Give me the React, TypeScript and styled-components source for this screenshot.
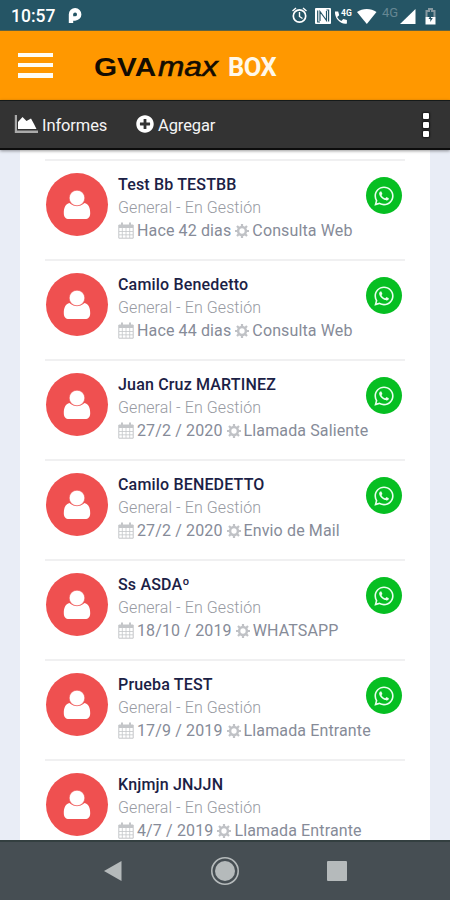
import React from 'react';
import styled, { createGlobalStyle } from 'styled-components';
import { FaPlusCircle, FaWhatsapp } from 'react-icons/fa';

const GlobalStyle = createGlobalStyle`
  * { box-sizing: border-box; }
  body { margin: 0; background: #e9edf6; font-family: Roboto, "Noto Sans", sans-serif; }
`;

const Screen = styled.div`
  width: 450px;
  height: 900px;
  display: flex;
  flex-direction: column;
  overflow: hidden;
`;

const StatusBar = styled.div`
  flex: none;
  height: 31px;
  padding: 1px 13px 0 11px;
  display: flex;
  align-items: center;
  justify-content: space-between;
  background: #255565;
  border-bottom: 1px solid #5d6344;
  color: #fff;
`;

const Clock = styled.div`
  display: flex;
  align-items: center;
  gap: 13px;
  font-size: 17.5px;
  font-weight: 500;
  line-height: 30px;
`;

const StatusIcons = styled.div`
  display: flex;
  align-items: center;
`;

const Network = styled.span`
  width: 18px;
  margin: -6px 0 0 4px;
  font-size: 13px;
  line-height: 14px;
  color: #658793;
`;

const Header = styled.header`
  flex: none;
  height: 69px;
  padding: 0 18px;
  display: flex;
  align-items: center;
  background: #ff9800;
`;

const MenuButton = styled.div`
  width: 35px;
  height: 25px;
  margin-top: -1px;
  display: flex;
  flex-direction: column;
  justify-content: space-between;
`;

const MenuLine = styled.span`
  height: 4.5px;
  background: #fffdf5;
`;

const Brand = styled.h1`
  margin: 2px 0 0 41px;
  display: flex;
  align-items: baseline;
  font-size: 25px;
  line-height: 32px;
  font-weight: 700;
`;

const BrandName = styled.span`
  width: 64px;
  color: #130c02;
  font-family: "Liberation Sans", sans-serif;
  font-weight: 700;
  font-size: 26.5px;
  transform: scaleX(1.12);
  transform-origin: left;
`;

const BrandSuffix = styled.span`
  width: 70px;
  color: #130c02;
  font-family: "Liberation Sans", sans-serif;
  font-style: italic;
  font-weight: 400;
  font-size: 27px;
  transform: scaleX(1.17);
  transform-origin: left;
  -webkit-text-stroke: 0.6px #130c02;
`;

const BrandProduct = styled.span`
  color: #fff8ea;
  font-size: 25.5px;
  letter-spacing: -0.6px;
`;

const Toolbar = styled.nav`
  flex: none;
  height: 50px;
  padding: 1px 21px 0 14px;
  display: flex;
  align-items: center;
  background: #333;
  border-top: 1px solid #151a1a;
  border-bottom: 2px solid #0c0c0c;
  box-shadow: 0 1px 3px rgba(0, 0, 0, 0.4);
  z-index: 1;
`;

const ToolbarItem = styled.div<{ $gap: number; $width: number }>`
  width: ${({ $width }) => $width}px;
  display: flex;
  align-items: center;
  gap: ${({ $gap }) => $gap}px;
  color: #f5f5f5;
  font-size: 16.5px;
  letter-spacing: -0.1px;
  white-space: nowrap;

  svg { margin-top: -2px; }
`;

const MoreButton = styled.div`
  margin-left: auto;
  display: flex;
  flex-direction: column;
  gap: 3px;
`;

const MoreDot = styled.span`
  width: 6px;
  height: 6px;
  border-radius: 1px;
  background: #fff;
  box-shadow: 0 0 2px 1px #151515;
`;

const Content = styled.main`
  flex: 1;
  min-height: 0;
  padding: 0 20px;
  overflow: hidden;
  background: #e9edf6;
`;

const Card = styled.div`
  height: 100%;
  padding: 9px 25px 0;
  overflow: hidden;
  background: #fff;
`;

const ContactRow = styled.article`
  height: 100px;
  padding: 12px 3px 0 1px;
  display: flex;
  align-items: flex-start;
  border-top: 2px solid #f0f0f1;
`;

const Avatar = styled.div`
  flex: none;
  width: 62px;
  height: 63px;
  border-radius: 50%;
  display: flex;
  align-items: center;
  justify-content: center;
  background: #ef5050;
`;

const Details = styled.div`
  flex: 1;
  min-width: 0;
  margin-left: 10px;
  font-size: 16px;
  line-height: 23px;
  white-space: nowrap;
`;

const Name = styled.div`
  color: #1b2145;
  font-weight: 500;
  letter-spacing: 0.17px;
`;

const Status = styled.div`
  color: #979aa2;
  font-weight: 300;
  letter-spacing: 0.08px;
`;

const Activity = styled.div`
  display: flex;
  align-items: center;
  color: #868b98;
  letter-spacing: 0.13px;

  svg { flex: none; }
  span { margin: 0 4px 0 3px; }
`;

const WhatsAppButton = styled.div`
  flex: none;
  width: 36px;
  height: 37px;
  margin: 4px 0 0 -36px;
  border-radius: 50%;
  display: flex;
  align-items: center;
  justify-content: center;
  background: #06bf22;
  color: #e9ffed;
`;

const NavigationBar = styled.footer`
  flex: none;
  height: 60px;
  padding: 0 103px;
  display: flex;
  align-items: center;
  justify-content: space-between;
  background: #464e53;
  border-top: 2px solid #333f40;
`;

const ParkingIcon = () => (
  <svg width="14" height="17" viewBox="0 0 14 17" fill="none">
    <path d="M3 16V7.300a4.100 4.100 0 1 1 4.100 4.200H4" stroke="#fff" strokeWidth="4.400" />
    <circle cx="7" cy="7.200" r="1.200" fill="#255565" />
  </svg>
);

const SystemIcons = () => (
  <svg width="86" height="20" viewBox="0 0 86 20" fill="none">
    <g stroke="#fff" strokeWidth="1.7">
      <circle cx="7.500" cy="10" r="6.200" />
      <path d="M7.500 6v4.500l3 2M.5 5 4 2M14.500 5 11 2" strokeWidth="1.4" />
    </g>
    <rect x="23" y="2" width="16" height="16" rx="1" fill="#fff" />
    <path d="M28 15V5.500l6.500 9V5M25.700 4.500v11.500H28M36.600 15.500V4h-2.200" stroke="#255565" strokeWidth="1.2" />
    <path d="M43 5.500h3.200l1 3.700-2 1.700c1 2 2.400 3.200 4.200 4l1.800-2 3.700 1v3.600c-6 1.300-12.500-5-11.900-12z" fill="#fff" />
    <text x="49" y="9.500" fill="#fff" fontSize="8.500" fontWeight="700" fontFamily="Roboto">4G</text>
    <path d="M65 6c5.500-4 14-4 19.500 0l-9.700 12z" fill="#fff" />
  </svg>
);

const SignalIcons = () => (
  <svg width="37" height="20" viewBox="0 0 37 20" fill="none">
    <path d="M0 18 15.500 3v15z" fill="#fff" />
    <path d="M26.500 11V5h2.500V3h3v2h2.500v6" stroke="#8799a0" strokeWidth="2" />
    <path d="M25.500 11h10v7.500h-10z" fill="#fff" />
    <path d="m31 9-2.500 4h1.800v3l2.500-4H31z" fill="#255565" />
  </svg>
);

const ReportIcon = () => (
  <svg width="24" height="18" viewBox="0 0 24 18">
    <path d="M.8 0h2.200v15.500h21V18H.8z" fill="#aaa" />
    <path d="M4 14V7L8.500 2 12.500 6 17 3.500l3 5.500 2.500 5z" fill="#fff" />
  </svg>
);

const PersonIcon = () => (
  <svg width="28" height="30" viewBox="0 0 28 30">
    <path
      d="M6.500 13C2.300 14 .8 18 .8 23.200.8 26.800 2.700 29 6 29h16c3.300 0 5.200-2.200 5.200-5.800 0-5.200-1.500-9.200-5.700-10.200-4 4-11 4-15 0z"
      fill="#fff"
    />
    <circle cx="14" cy="8" r="7.800" fill="#fff" stroke="#ef5050" strokeWidth=".6" />
  </svg>
);

const CalendarIcon = () => (
  <svg width="16" height="17" viewBox="0 0 16 17" fill="none" stroke="#c4c6c9">
    <path d="M.8 3h14.400v13.200H.8z" />
    <path d="M.8 4.500h14.400" strokeWidth="3" />
    <path d="M1 9.500h14M1 12.800h14M4.300 6v10M8 6v10M11.700 6v10" strokeWidth=".8" />
    <path d="M4 .5v4M12 .5v4" strokeWidth="2" />
  </svg>
);

const GearIcon = () => (
  <svg width="14" height="14" viewBox="0 0 14 14" fill="none" stroke="#c0c2c6">
    <circle cx="7" cy="7" r="3.900" strokeWidth="2.500" />
    <path
      d="M7 0v3M7 11v3M0 7h3M11 7h3M2 2l2.200 2.200M9.800 9.800 12 12M2 12l2.200-2.200M9.800 4.200 12 2"
      strokeWidth="2.200"
    />
  </svg>
);

type Contact = {
  name: string;
  date: string;
  activity: string;
  whatsapp: boolean;
};

const contacts: Contact[] = [
  { name: 'Test Bb TESTBB', date: 'Hace 42 dias', activity: 'Consulta Web', whatsapp: true },
  { name: 'Camilo Benedetto', date: 'Hace 44 dias', activity: 'Consulta Web', whatsapp: true },
  { name: 'Juan Cruz MARTINEZ', date: '27/2 / 2020', activity: 'Llamada Saliente', whatsapp: true },
  { name: 'Camilo BENEDETTO', date: '27/2 / 2020', activity: 'Envio de Mail', whatsapp: true },
  { name: 'Ss ASDAº', date: '18/10 / 2019', activity: 'WHATSAPP', whatsapp: true },
  { name: 'Prueba TEST', date: '17/9 / 2019', activity: 'Llamada Entrante', whatsapp: true },
  { name: 'Knjmjn JNJJN', date: '4/7 / 2019', activity: 'Llamada Entrante', whatsapp: false },
];

export default function App() {
  return (
    <Screen>
      <GlobalStyle />
      <StatusBar>
        <Clock>
          10:57
          <ParkingIcon />
        </Clock>
        <StatusIcons>
          <SystemIcons />
          <Network>4G</Network>
          <SignalIcons />
        </StatusIcons>
      </StatusBar>
      <Header>
        <MenuButton>
          <MenuLine />
          <MenuLine />
          <MenuLine />
        </MenuButton>
        <Brand>
          <BrandName>GVA</BrandName>
          <BrandSuffix>max</BrandSuffix>
          <BrandProduct>BOX</BrandProduct>
        </Brand>
      </Header>
      <Toolbar>
        <ToolbarItem $gap={4} $width={122}>
          <ReportIcon />
          Informes
        </ToolbarItem>
        <ToolbarItem $gap={4} $width={90}>
          <FaPlusCircle size={18} color="#fff" />
          Agregar
        </ToolbarItem>
        <MoreButton>
          <MoreDot />
          <MoreDot />
          <MoreDot />
        </MoreButton>
      </Toolbar>
      <Content>
        <Card>
          {contacts.map((contact) => (
            <ContactRow key={contact.name}>
              <Avatar>
                <PersonIcon />
              </Avatar>
              <Details>
                <Name>{contact.name}</Name>
                <Status>General - En Gestión</Status>
                <Activity>
                  <CalendarIcon />
                  <span>{contact.date}</span>
                  <GearIcon />
                  <span>{contact.activity}</span>
                </Activity>
              </Details>
              {contact.whatsapp && (
                <WhatsAppButton>
                  <FaWhatsapp size={22} />
                </WhatsAppButton>
              )}
            </ContactRow>
          ))}
        </Card>
      </Content>
      <NavigationBar>
        <svg width="19" height="22" viewBox="0 0 19 22">
          <path d="M18.500 1v20L1 11z" fill="#b5babb" />
        </svg>
        <svg width="30" height="30" viewBox="0 0 30 30">
          <circle cx="15" cy="15" r="13.200" fill="none" stroke="#b5babb" strokeWidth="1.600" />
          <circle cx="15" cy="15" r="10" fill="#b5babb" />
        </svg>
        <svg width="20" height="20" viewBox="0 0 20 20">
          <rect width="20" height="20" rx="1" fill="#b5babb" />
        </svg>
      </NavigationBar>
    </Screen>
  );
}
